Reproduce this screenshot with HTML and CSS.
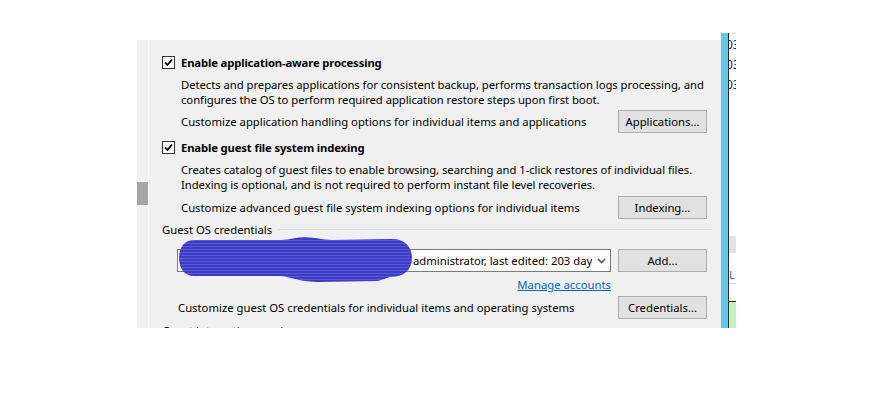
FILE: index.html
```html
<!DOCTYPE html>
<html>
<head>
<meta charset="utf-8">
<link rel="stylesheet" href="styles.css">
</head>
<body>
<div class="screen">
  <div class="panel">
    <div class="track"><div class="thumb"></div></div>
    <div class="content">
      <div class="check-row">
        <span class="cb"><svg width="11" height="11" viewBox="0 0 11 11"><path d="M2 5.5 L4.5 8 L9 2.5" fill="none" stroke="#000" stroke-width="1.8"/></svg></span>
        <span class="bold">Enable application-aware processing</span>
      </div>
      <p class="desc">Detects and prepares applications for consistent backup, performs transaction logs processing, and<br>configures the OS to perform required application restore steps upon first boot.</p>
      <div class="opt-row">
        <span>Customize application handling options for individual items and applications</span>
        <button class="btn">Applications...</button>
      </div>
      <div class="check-row check-row--second">
        <span class="cb"><svg width="11" height="11" viewBox="0 0 11 11"><path d="M2 5.5 L4.5 8 L9 2.5" fill="none" stroke="#000" stroke-width="1.8"/></svg></span>
        <span class="bold">Enable guest file system indexing</span>
      </div>
      <p class="desc">Creates catalog of guest files to enable browsing, searching and 1-click restores of individual files.<br>Indexing is optional, and is not required to perform instant file level recoveries.</p>
      <div class="opt-row opt-row--idx">
        <span>Customize advanced guest file system indexing options for individual items</span>
        <button class="btn">Indexing...</button>
      </div>
      <div class="group"><span>Guest OS credentials</span><span class="rule"></span></div>
      <div class="combo-row">
        <div class="combo"><span class="combo-text">administrator, last edited: 203 days ago</span><svg class="chev" width="9" height="6" viewBox="0 0 9 6"><path d="M1 1 L4.5 4.5 L8 1" fill="none" stroke="#555" stroke-width="1.6"/></svg></div>
        <button class="btn">Add...</button>
      </div>
      <div class="link-row"><a class="link" href="#">Manage accounts</a></div>
      <div class="opt-row opt-row--cred">
        <span>Customize guest OS credentials for individual items and operating systems</span>
        <button class="btn">Credentials...</button>
      </div>
      <div class="group group--cut"><span>Guest interaction proxies</span></div>
      <svg class="blob" width="240" height="50" viewBox="0 0 240 50">
        <defs>
          <pattern id="stripes" width="6" height="3" patternUnits="userSpaceOnUse">
            <rect width="6" height="3" fill="#3c3cc4"/>
            <rect y="1" width="6" height="1" fill="#5a5ad8"/>
          </pattern>
        </defs>
        <path d="M16 4 L103 4 C112 4 118 1 126 1 C136 1 145 4 153 4 L212 3 C226 2 234 10 234 22 C234 34 226 41 212 41 L200 45 L140 46 C125 46 115 42 103 40 L16 40 C6 40 1 32 1 22 C1 12 6 4 16 4 Z" fill="url(#stripes)"/>
      </svg>
    </div>
  </div>
  <div class="bluebar"></div>
  <div class="darkline"></div>
  <div class="strip">
    <div class="num">03</div>
    <div class="num">03</div>
    <div class="num">03</div>
    <div class="band"></div>
    <div class="ll">LL</div>
    <div class="green"></div>
  </div>
</div>
</body>
</html>
```
FILE: styles.css
```css
html, body {
  margin: 0;
  padding: 0;
  background: #fff;
}
body {
  font-family: "Noto Sans", "Liberation Sans", sans-serif;
  font-size: 11.3px;
  color: #000;
}
.screen {
  display: flex;
  align-items: flex-start;
  margin: 33px 0 0 137px;
}
.panel {
  display: flex;
  width: 584px;
  height: 288px;
  margin-top: 7px;
  background: #f0f0f0;
  overflow: hidden;
}
.track {
  width: 11px;
  flex: none;
  border-right: 1px solid #f8f8f8;
  background: #f0f0f0;
}
.thumb {
  margin-top: 142px;
  height: 23px;
  background: #a6a6a6;
}
.content {
  position: relative;
  flex: 1;
  padding: 15px 14px 0 13px;
  line-height: 15px;
}
.check-row {
  display: flex;
  align-items: center;
  height: 15px;
}
.check-row--second {
  margin-top: 7px;
}
.cb {
  box-sizing: border-box;
  width: 13px;
  height: 13px;
  border: 1px solid #333;
  background: #fff;
  display: flex;
  align-items: center;
  justify-content: center;
  margin-right: 6px;
}
.bold {
  font-weight: bold;
  letter-spacing: -0.15px;
}
.desc {
  margin: 7px 0 0 19px;
  white-space: nowrap;
  letter-spacing: -0.05px;
}
.opt-row {
  display: flex;
  align-items: center;
  justify-content: space-between;
  margin: 3px 0 0 19px;
}
.opt-row--idx {
  margin-top: 4px;
}
.opt-row--cred {
  margin: 4px 0 0 16px;
}
.btn {
  box-sizing: border-box;
  width: 89px;
  height: 23px;
  background: #e1e1e1;
  border: 1px solid #adadad;
  font: inherit;
  color: #000;
  padding: 0;
}
.group {
  display: flex;
  align-items: center;
  margin: 3px -5px 0 0;
}
.rule {
  flex: 1;
  height: 1px;
  background: #d5dfe5;
  margin-left: 6px;
}
.group--cut {
  margin-top: 4px;
}
.combo-row {
  display: flex;
  gap: 7px;
  margin: 12px 0 0 15px;
}
.combo {
  box-sizing: border-box;
  width: 434px;
  height: 23px;
  background: #fff;
  border: 1px solid #7a7a7a;
  display: flex;
  align-items: center;
  padding: 0 4px 0 235px;
}
.combo-text {
  flex: 1;
  white-space: nowrap;
  overflow: hidden;
}
.chev {
  margin-left: 5px;
}
.link-row {
  width: 434px;
  margin: 5px 0 0 15px;
  text-align: right;
}
.link {
  color: #0066cc;
  text-decoration: underline;
}
.blob {
  position: absolute;
  left: 29px;
  top: 196px;
}
.bluebar {
  width: 7px;
  height: 295px;
  background: #64c8e8;
}
.darkline {
  width: 1px;
  height: 295px;
  background: #2b2b2b;
}
.strip {
  width: 7px;
  height: 295px;
  overflow: hidden;
  display: flex;
  flex-direction: column;
  border-top: 1px solid #e0e0e0;
  box-sizing: border-box;
}
.num {
  height: 20px;
  line-height: 20px;
  text-indent: -3px;
  color: #1a237e;
  font-size: 12px;
  white-space: nowrap;
}
.num:first-child {
  margin-top: 1px;
}
.band {
  margin-top: 141px;
  height: 17px;
  background: #e3e3e3;
}
.ll {
  margin-top: 13px;
  height: 17px;
  line-height: 17px;
  color: #3060c0;
  border-bottom: 1px solid #d8d8d8;
  white-space: nowrap;
}
.green {
  margin-top: 17px;
  flex: 1;
  border-top: 1px solid #222;
  background: #c6efc0;
}
```
